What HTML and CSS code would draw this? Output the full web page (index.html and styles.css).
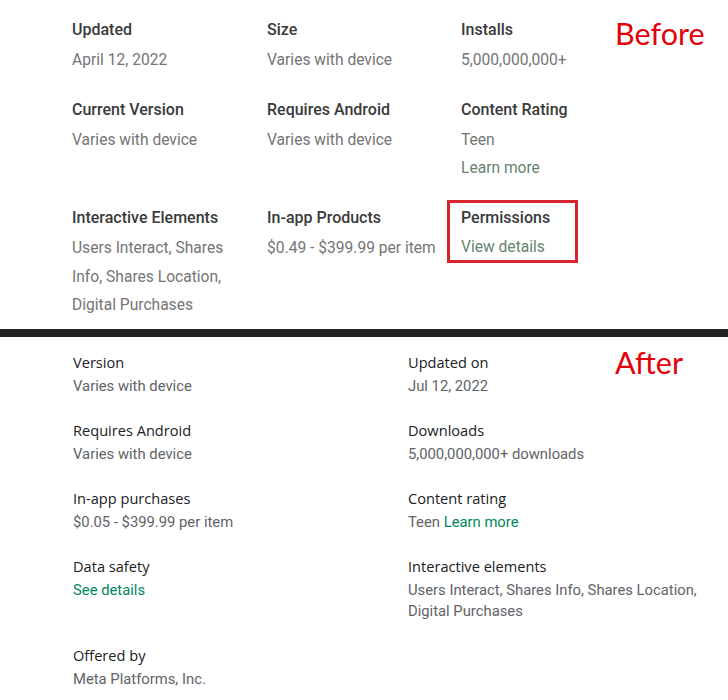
FILE: index.html
```html
<!DOCTYPE html>
<html>
<head>
<meta charset="utf-8">
<link rel="stylesheet" href="styles.css">
</head>
<body>
<section class="before">
  <div class="label label-before">Before</div>
  <div class="grid-old">
    <div class="cell">
      <div class="h">Updated</div>
      <div class="v">April 12, 2022</div>
    </div>
    <div class="cell">
      <div class="h">Size</div>
      <div class="v">Varies with device</div>
    </div>
    <div class="cell">
      <div class="h">Installs</div>
      <div class="v">5,000,000,000+</div>
    </div>
    <div class="cell">
      <div class="h">Current Version</div>
      <div class="v">Varies with device</div>
    </div>
    <div class="cell">
      <div class="h">Requires Android</div>
      <div class="v">Varies with device</div>
    </div>
    <div class="cell">
      <div class="h">Content Rating</div>
      <div class="v">Teen</div>
      <div class="v link-old">Learn more</div>
    </div>
    <div class="cell">
      <div class="h">Interactive Elements</div>
      <div class="v">Users Interact, Shares<br>Info, Shares Location,<br>Digital Purchases</div>
    </div>
    <div class="cell">
      <div class="h">In-app Products</div>
      <div class="v">$0.49 - $399.99 per item</div>
    </div>
    <div class="cell">
      <div class="boxed">
        <div class="h">Permissions</div>
        <div class="v link-old">View details</div>
      </div>
    </div>
  </div>
</section>
<div class="divider"></div>
<section class="after">
  <div class="label label-after">After</div>
  <div class="grid-new">
    <div class="item">
      <div class="nh">Version</div>
      <div class="nv">Varies with device</div>
    </div>
    <div class="item">
      <div class="nh">Updated on</div>
      <div class="nv">Jul 12, 2022</div>
    </div>
    <div class="item">
      <div class="nh">Requires Android</div>
      <div class="nv">Varies with device</div>
    </div>
    <div class="item">
      <div class="nh">Downloads</div>
      <div class="nv">5,000,000,000+ downloads</div>
    </div>
    <div class="item">
      <div class="nh">In-app purchases</div>
      <div class="nv">$0.05 - $399.99 per item</div>
    </div>
    <div class="item">
      <div class="nh">Content rating</div>
      <div class="nv">Teen <span class="link-new">Learn more</span></div>
    </div>
    <div class="item">
      <div class="nh">Data safety</div>
      <div class="nv link-new">See details</div>
    </div>
    <div class="item">
      <div class="nh">Interactive elements</div>
      <div class="nv">Users Interact, Shares Info, Shares Location,<br>Digital Purchases</div>
    </div>
    <div class="item">
      <div class="nh">Offered by</div>
      <div class="nv">Meta Platforms, Inc.</div>
    </div>
  </div>
</section>
</body>
</html>
```

FILE: styles.css
```css
html, body {
  margin: 0;
  padding: 0;
  background: #ffffff;
}

body {
  width: 728px;
  height: 700px;
  overflow: hidden;
  font-family: Roboto, "Liberation Sans", sans-serif;
}

.before {
  position: relative;
  height: 329px;
  box-sizing: border-box;
  padding: 16px 0 0 72px;
}

.grid-old {
  display: grid;
  grid-template-columns: 195px 194px 160px;
  row-gap: 21.8px;
  align-items: start;
}

.h {
  font-size: 16px;
  line-height: 28px;
  font-weight: 500;
  color: #3a3a3a;
  margin-bottom: 2px;
  white-space: nowrap;
}

.v {
  font-size: 15.6px;
  line-height: 28.3px;
  font-weight: 400;
  color: #757575;
  white-space: nowrap;
}

.link-old {
  color: #66846e;
}

.boxed {
  width: fit-content;
  border: 3px solid #d52630;
  margin: -4px 0 0 -14px;
  padding: 1px 25px 0 11px;
}

.boxed .v {
  line-height: 26px;
}

.label {
  position: absolute;
  font-family: Lato, "Open Sans", sans-serif;
  color: #e2000b;
  font-size: 30.5px;
  line-height: 36px;
}

.label-before {
  left: 615px;
  top: 15px;
}

.label-after {
  left: 615px;
  top: 344px;
}

.divider {
  height: 8px;
  background: #232323;
}

.after {
  padding: 15px 0 0 73px;
}

.grid-new {
  display: grid;
  grid-template-columns: 335px auto;
  row-gap: 23px;
  align-items: start;
}

.nh {
  font-family: "Open Sans", Roboto, sans-serif;
  font-size: 14.6px;
  line-height: 20px;
  font-weight: 500;
  color: #202124;
  margin-bottom: 4px;
  white-space: nowrap;
}

.nv {
  font-size: 14.8px;
  line-height: 21px;
  color: #5f6368;
  white-space: nowrap;
}

.link-new {
  color: #01875f;
}
```
